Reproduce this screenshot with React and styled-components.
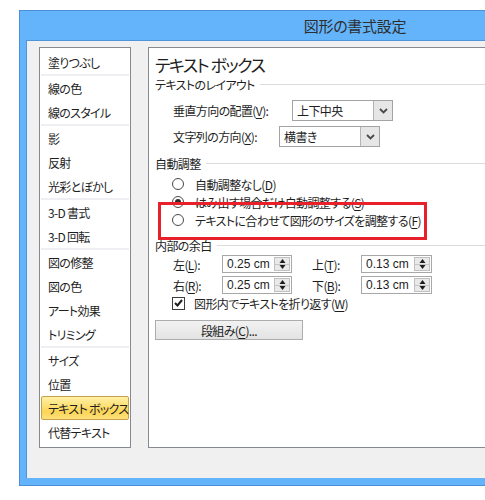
import React from 'react';
import styled, { createGlobalStyle, css } from 'styled-components';

const GlobalStyle = createGlobalStyle`
    body {
        margin: 0;
        background: #ffffff;
        overflow: hidden;
        font-family: "Noto Sans CJK JP", "Liberation Sans", sans-serif;
        font-feature-settings: "palt";
        color: #1e1e1e;
    }
`;

const Window = styled.div`
    box-sizing: border-box;
    margin: 10px 0 0 19px;
    width: 666px;
    height: 476px;
    border: 1px solid #4c8fd6;
    background: #63b4fb;
    padding: 0 0 7px 6px;
    display: flex;
    flex-direction: column;
`;

const TitleBar = styled.div`
    height: 29px;
    flex: none;
    display: flex;
    align-items: center;
    justify-content: center;
    font-size: 15px;
    letter-spacing: -0.3px;
    color: #2e2e2e;
`;

const Client = styled.div`
    flex: 1;
    background: #f0f0f0;
    border-top: 1px solid #4f93da;
    border-left: 1px solid #4f93da;
    padding: 6px 0 0 12px;
    display: flex;
    align-items: flex-start;
    gap: 17px;
`;

const NavList = styled.div`
    box-sizing: border-box;
    width: 92px;
    height: 401px;
    flex: none;
    border: 1px solid #858a91;
    background: #ffffff;
    padding: 2px 1px;
    display: flex;
    flex-direction: column;
`;

const NavItem = styled.div`
    box-sizing: border-box;
    height: 24px;
    padding-left: 7px;
    display: flex;
    align-items: center;
    font-size: 12px;
    letter-spacing: -0.7px;
    white-space: nowrap;
    color: #1e1e1e;
    ${p => p.$active && css`
        padding-left: 6px;
        border: 1px solid #c4a24c;
        border-radius: 2px;
        background: linear-gradient(to bottom, #fff0a6 0%, #fde27c 35%, #fcd556 65%, #fde07a 100%);
    `}
`;

const NavSep = styled.div`
    height: 2px;
    background: #efeff3;
`;

const Panel = styled.div`
    box-sizing: border-box;
    flex: 1;
    height: 401px;
    border: 1px solid #858a91;
    background: #ffffff;
    position: relative;
    padding: 4px 0 0 6px;
    font-size: 12px;
    letter-spacing: -0.6px;
`;

const Heading = styled.div`
    height: 24px;
    display: flex;
    align-items: center;
    font-size: 17px;
    letter-spacing: -1.5px;
    color: #1e1e1e;
`;

const Section = styled.div`
    height: 16px;
    margin-top: ${p => p.$top || 0}px;
    display: flex;
    align-items: center;
    gap: 5px;

    &::after {
        content: "";
        flex: 1;
        height: 1px;
        background: #dcdcdc;
    }
`;

const FieldRow = styled.div`
    height: 21px;
    margin-top: ${p => p.$top}px;
    padding-left: 18px;
    display: flex;
    align-items: center;
`;

const FieldLabel = styled.div`
    width: ${p => p.$w}px;
    flex: none;
`;

const Select = styled.div`
    box-sizing: border-box;
    width: ${p => p.$w}px;
    height: 21px;
    border: 1px solid #a3a3a3;
    display: flex;
    align-items: stretch;
    background: #ffffff;
`;

const SelectValue = styled.div`
    flex: 1;
    padding-left: 4px;
    display: flex;
    align-items: center;
`;

const DropButton = styled.div`
    width: 18px;
    border-left: 1px solid #b4b4b4;
    background: #e6e6e6;
    display: flex;
    align-items: center;
    justify-content: center;
`;

const RadioGroup = styled.div`
    margin-top: 4px;
    padding-left: 17px;
    display: flex;
    flex-direction: column;
`;

const RadioRow = styled.div`
    height: 18px;
    display: flex;
    align-items: center;
    gap: 11px;
    white-space: nowrap;
`;

const RadioDot = styled.span`
    box-sizing: border-box;
    width: 12px;
    height: 12px;
    border-radius: 50%;
    border: 1px solid #4a4a4a;
    background: #ffffff;
    display: flex;
    align-items: center;
    justify-content: center;

    &::after {
        content: "";
        width: 6px;
        height: 6px;
        border-radius: 50%;
        background: ${p => (p.$checked ? '#2c2c2c' : 'transparent')};
    }
`;

const SpinGrid = styled.div`
    margin-top: 2px;
    padding-left: 18px;
    display: grid;
    grid-template-columns: 49px 90px 49px 71px;
    row-gap: 3px;
    align-items: center;
`;

const SpinBox = styled.div`
    box-sizing: border-box;
    width: ${p => p.$w}px;
    height: 18px;
    border: 1px solid #a8a8a8;
    display: flex;
    align-items: stretch;
`;

const SpinValue = styled.div`
    flex: 1;
    padding-left: 4px;
    display: flex;
    align-items: center;
    font-family: "Liberation Sans", sans-serif;
    font-size: 12px;
    letter-spacing: 0;
`;

const SpinButtons = styled.div`
    width: 14px;
    margin: 1px 1px 1px 0;
    border: 1px solid #c0c0c0;
    background: #e9e9e9;
    display: flex;
    flex-direction: column;
`;

const SpinHalf = styled.div`
    flex: 1;
    display: flex;
    align-items: center;
    justify-content: center;
    ${p => p.$bottom && 'border-top: 1px solid #c6c6c6;'}
`;

const CheckRow = styled.div`
    height: 16px;
    margin-top: 1px;
    padding-left: 17px;
    display: flex;
    align-items: center;
    gap: 9px;
`;

const CheckBox = styled.span`
    box-sizing: border-box;
    width: 13px;
    height: 13px;
    border: 1px solid #3c3c3c;
    background: #ffffff;
    display: flex;
    align-items: center;
    justify-content: center;
`;

const Button = styled.div`
    box-sizing: border-box;
    width: 148px;
    height: 20px;
    margin-top: 9px;
    border: 1px solid #acacac;
    background: linear-gradient(to bottom, #f2f2f2, #e3e3e3);
    display: flex;
    align-items: center;
    justify-content: center;
`;

const Callout = styled.div`
    position: absolute;
    box-sizing: border-box;
    left: 9px;
    top: 154px;
    width: 269px;
    height: 38px;
    border: 3px solid #e8202a;
    pointer-events: none;
`;

const U = styled.span`
    text-decoration: underline;
    text-underline-offset: 2px;
`;

const Chevron = () => (
    <svg width="9" height="6" viewBox="0 0 9 6">
        <path d="M1 1 L4.5 4.5 L8 1" fill="none" stroke="#4a4a4a" strokeWidth="1.8" />
    </svg>
);

const Arrow = ({ down }) => (
    <svg width="7" height="4" viewBox="0 0 7 4">
        <path d={down ? 'M0.5 0 L6.5 0 L3.5 4 Z' : 'M0.5 4 L6.5 4 L3.5 0 Z'} fill="#1e1e1e" />
    </svg>
);

const Spin = ({ value, w }) => (
    <SpinBox $w={w}>
        <SpinValue>{value}</SpinValue>
        <SpinButtons>
            <SpinHalf><Arrow /></SpinHalf>
            <SpinHalf $bottom><Arrow down /></SpinHalf>
        </SpinButtons>
    </SpinBox>
);

const navGroups = [
    ['塗りつぶし'],
    ['線の色', '線のスタイル'],
    ['影', '反射', '光彩とぼかし'],
    ['3-D 書式', '3-D 回転'],
    ['図の修整', '図の色', 'アート効果', 'トリミング'],
    ['サイズ', '位置', 'テキスト ボックス', '代替テキスト'],
];

const radios = [
    { text: '自動調整なし', key: 'D' },
    { text: 'はみ出す場合だけ自動調整する', key: 'S', checked: true },
    { text: 'テキストに合わせて図形のサイズを調整する', key: 'F' },
];

export default function App() {
    return (
        <>
            <GlobalStyle />
            <Window>
                <TitleBar>図形の書式設定</TitleBar>
                <Client>
                    <NavList>
                        {navGroups.map((group, gi) => (
                            <React.Fragment key={gi}>
                                {gi > 0 && <NavSep />}
                                {group.map(item => (
                                    <NavItem key={item} $active={item === 'テキスト ボックス'}>{item}</NavItem>
                                ))}
                            </React.Fragment>
                        ))}
                    </NavList>
                    <Panel>
                        <Heading>テキスト ボックス</Heading>
                        <Section>テキストのレイアウト</Section>
                        <FieldRow $top={8}>
                            <FieldLabel $w={119}>垂直方向の配置(<U>V</U>):</FieldLabel>
                            <Select $w={101}>
                                <SelectValue>上下中央</SelectValue>
                                <DropButton><Chevron /></DropButton>
                            </Select>
                        </FieldRow>
                        <FieldRow $top={5}>
                            <FieldLabel $w={106}>文字列の方向(<U>X</U>):</FieldLabel>
                            <Select $w={101}>
                                <SelectValue>横書き</SelectValue>
                                <DropButton><Chevron /></DropButton>
                            </Select>
                        </FieldRow>
                        <Section $top={8}>自動調整</Section>
                        <RadioGroup>
                            {radios.map(r => (
                                <RadioRow key={r.key}>
                                    <RadioDot $checked={r.checked} />
                                    <span>{r.text}(<U>{r.key}</U>)</span>
                                </RadioRow>
                            ))}
                        </RadioGroup>
                        <Section $top={8}>内部の余白</Section>
                        <SpinGrid>
                            <span>左(<U>L</U>):</span>
                            <Spin value="0.25 cm" w={70} />
                            <span>上(<U>T</U>):</span>
                            <Spin value="0.13 cm" w={71} />
                            <span>右(<U>R</U>):</span>
                            <Spin value="0.25 cm" w={70} />
                            <span>下(<U>B</U>):</span>
                            <Spin value="0.13 cm" w={71} />
                        </SpinGrid>
                        <CheckRow>
                            <CheckBox>
                                <svg width="9" height="8" viewBox="0 0 9 8">
                                    <path d="M1 4 L3.5 6.5 L8 1" fill="none" stroke="#1e1e1e" strokeWidth="2" />
                                </svg>
                            </CheckBox>
                            <span>図形内でテキストを折り返す(<U>W</U>)</span>
                        </CheckRow>
                        <Button>段組み(<U>C</U>)...</Button>
                        <Callout />
                    </Panel>
                </Client>
            </Window>
        </>
    );
}
